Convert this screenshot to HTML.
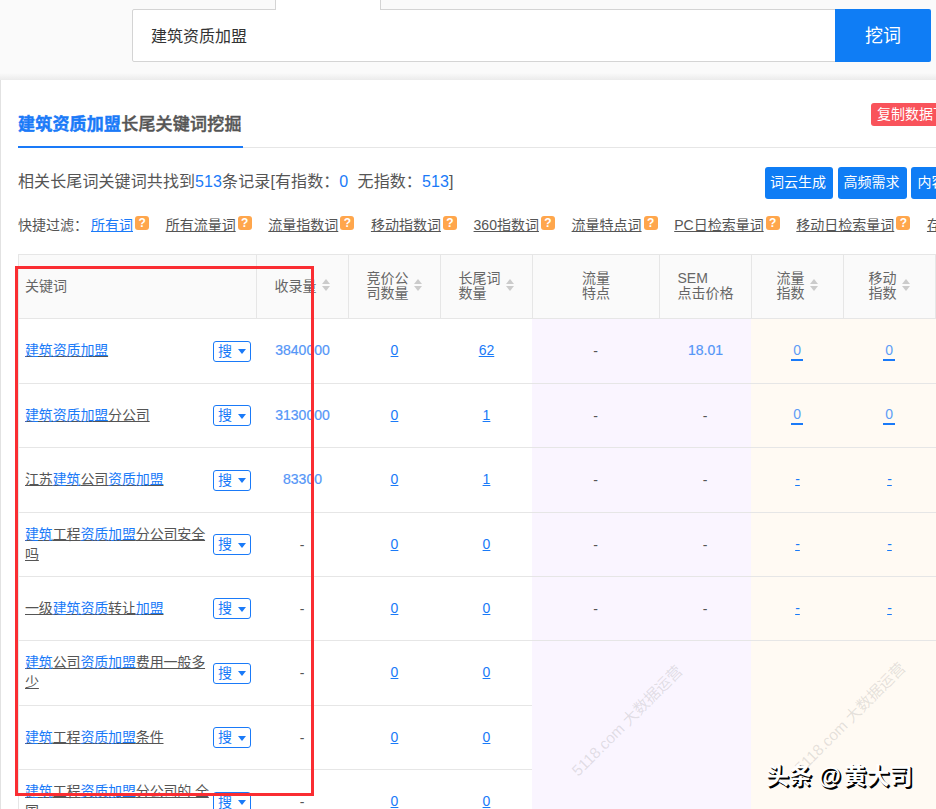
<!DOCTYPE html><html lang="zh-CN"><head><meta charset="utf-8"><title>长尾关键词挖掘</title><style>
*{margin:0;padding:0;box-sizing:border-box}
html,body{width:936px;height:809px;overflow:hidden;background:#fff}
body{position:relative;font-family:"Liberation Sans","Noto Sans CJK SC",sans-serif;font-size:14px;color:#555;}
.abs{position:absolute}
a{color:#1a7af8;text-decoration:underline}
.hdr{left:0;top:0;width:936px;height:80px;background:#fafafa}
.hdr .shadow{left:0;top:73px;width:936px;height:7px;background:linear-gradient(#fafafa,#ebebeb)}
.inp{left:132px;top:9px;width:704px;height:53px;background:#fff;border:1px solid #d4d4d4;border-radius:2px 0 0 2px;font-size:16px;color:#333;line-height:53px;padding-left:18px}
.tabgap{left:276px;top:0;width:104px;height:10px;background:#fff}
.tabl{left:275px;top:0;width:1px;height:10px;background:#d4d4d4}
.tabr{left:380px;top:0;width:1px;height:10px;background:#d4d4d4}
.go{left:835px;top:9px;width:96px;height:53px;background:#0f7df5;color:#fff;font-size:18px;text-align:center;line-height:55px;border-radius:0 2px 2px 0}
.cardl{left:0;top:80px;width:1px;height:729px;background:#e2e2e2}
.title{left:18px;top:108.5px;font-size:17px;letter-spacing:.2px;font-weight:500;-webkit-text-stroke:.45px;line-height:32px;white-space:nowrap;color:#555}
.title b{color:#1a7af8}
.tline{left:18px;top:147px;width:918px;height:1px;background:#e6e6e6}
.tblue{left:18px;top:146px;width:225px;height:2px;background:#1a7af8}
.badge{left:871px;top:103px;width:90px;height:23px;background:#f9535b;border-radius:3px;color:#fff;font-size:14px;line-height:22px;padding-left:6px;white-space:nowrap}
.stat{left:18px;top:170px;letter-spacing:.1px;font-size:16px;line-height:24px;white-space:nowrap;color:#555}
.stat i{font-style:normal;color:#1a7af8}
.btn{top:167px;height:32px;width:68px;background:#0f7df5;color:#fff;border-radius:3px;font-size:14px;line-height:31px;padding-left:5px;white-space:nowrap;overflow:hidden}
.filt{left:18px;top:215px;font-size:14px;line-height:20px;white-space:nowrap;color:#555}
.filt a{color:#555}
.filt a.on{color:#1a7af8}
.q{display:inline-block;width:14px;height:14px;background:#ffa64c;border-radius:3px;color:#fff;font-size:12px;font-weight:bold;line-height:14px;text-align:center;vertical-align:top;margin:1px 16.55px 0 2.1px;text-decoration:none}
.thead{left:18px;top:254px;width:918px;height:64px;background:#fafafa}
.vl{width:1px;background:#e6e6e6}
.hl{height:1px;background:#e6e6e6}
.th{top:254px;height:64px;display:flex;align-items:center;justify-content:center;font-size:14px;line-height:15px;color:#666}
.th .t{display:block;text-align:left}
.sort{display:inline-block;width:9px;height:12px;margin-left:5px;position:relative;top:-1px}
.sort:before,.sort:after{content:"";position:absolute;left:0;border-left:4.5px solid transparent;border-right:4.5px solid transparent}
.sort:before{top:0;border-bottom:5px solid #cbcbcb}
.sort:after{bottom:0;border-top:5px solid #cbcbcb}
.purple{left:532px;top:318px;width:219px;height:491px;background:#faf5ff}
.orange{left:751px;top:318px;width:185px;height:491px;background:#fffaf3}
.kw{left:25px;width:186px;display:flex;align-items:center;line-height:20px;font-size:14px;letter-spacing:-.15px}
.kw a{color:#555}
.kw a b{font-weight:normal;color:#1a7af8}
.sou{left:213px;width:38px;height:21px;border:1px solid #1a7af8;border-radius:3px;color:#1a7af8;font-size:14px;line-height:19px;padding-left:4px;background:#fff}
.sou:after{content:"";position:absolute;left:23.5px;top:7.5px;border-left:4.3px solid transparent;border-right:4.3px solid transparent;border-top:5.3px solid #1a7af8}
.c{display:flex;align-items:center;justify-content:center;font-size:14px;line-height:20px}
.c.lb{color:#5596f7;-webkit-text-stroke:.2px #5596f7}
.c.d{padding-top:2px;padding-right:1px}
.c .u{color:#5d9df6;text-decoration:none;border-bottom:2px solid #1a7af8;padding:0 2px 2px 2px;line-height:14px;position:relative;top:1.7px;left:-.4px}
.wm{font-size:15.5px;color:rgba(120,120,120,.2);white-space:nowrap;transform:rotate(-45deg);transform-origin:center;line-height:20px}
.tt{left:766px;top:759px;font-size:23px;line-height:34px;color:#fff;white-space:nowrap;text-shadow:1px 1px 0 #000,1.7px 1.7px 0 #000;font-weight:700}.tt i{font-style:normal;margin:0 2.5px 0 6.5px}
.red{left:15px;top:266px;width:299px;height:530px;border:3px solid #fa2d32}
</style></head><body>
<div class="abs hdr"><div class="abs shadow"></div></div>
<div class="abs inp">建筑资质加盟</div>
<div class="abs tabgap"></div><div class="abs tabl"></div><div class="abs tabr"></div>
<div class="abs go">挖词</div>
<div class="abs cardl"></div>
<div class="abs title"><b>建筑资质加盟</b>长尾关键词挖掘</div>
<div class="abs tline"></div><div class="abs tblue"></div>
<div class="abs badge">复制数据下载</div>
<div class="abs stat">相关长尾词关键词共找到<i>513</i>条记录[有指数：<i>0</i><span style="display:inline-block;width:9.2px"></span>无指数：<i>513</i>]</div>
<div class="abs btn" style="left:765px;width:68px;padding-left:5.0px">词云生成</div>
<div class="abs btn" style="left:838px;width:69px;padding-left:5.5px">高频需求</div>
<div class="abs btn" style="left:911px;width:68px;padding-left:6.5px">内容分析</div>
<div class="abs filt">快捷过滤：<span style="display:inline-block;width:3px"></span><a class="on">所有词</a><span class="q">?</span><a>所有流量词</a><span class="q">?</span><a>流量指数词</a><span class="q">?</span><a>移动指数词</a><span class="q">?</span><a>360指数词</a><span class="q">?</span><a>流量特点词</a><span class="q">?</span><a>PC日检索量词</a><span class="q">?</span><a>移动日检索量词</a><span class="q">?</span><a>存在竞价词</a><span class="q">?</span></div>
<div class="abs thead"></div>
<div class="abs purple"></div><div class="abs orange"></div>
<div class="abs th" style="left:19px;width:237px;justify-content:flex-start;padding-left:6px"><span class="t">关键词</span></div>
<div class="abs th" style="left:257px;width:91px"><span class="t">收录量</span><span class="sort"></span></div>
<div class="abs th" style="left:349px;width:91px"><span class="t">竞价公<br>司数量</span><span class="sort"></span></div>
<div class="abs th" style="left:441px;width:91px"><span class="t">长尾词<br>数量</span><span class="sort"></span></div>
<div class="abs th" style="left:533px;width:126px"><span class="t">流量<br>特点</span></div>
<div class="abs th" style="left:660px;width:91px"><span class="t">SEM<br>点击价格</span></div>
<div class="abs th" style="left:752px;width:91px"><span class="t">流量<br>指数</span><span class="sort"></span></div>
<div class="abs th" style="left:844px;width:91px"><span class="t">移动<br>指数</span><span class="sort"></span></div>
<div class="abs hl" style="left:18px;top:254px;width:918px"></div>
<div class="abs vl" style="left:18px;top:254px;height:64px"></div>
<div class="abs vl" style="left:256px;top:254px;height:64px"></div>
<div class="abs vl" style="left:348px;top:254px;height:64px"></div>
<div class="abs vl" style="left:440px;top:254px;height:64px"></div>
<div class="abs vl" style="left:532px;top:254px;height:64px"></div>
<div class="abs vl" style="left:659px;top:254px;height:64px"></div>
<div class="abs vl" style="left:751px;top:254px;height:64px"></div>
<div class="abs vl" style="left:843px;top:254px;height:64px"></div>
<div class="abs vl" style="left:935px;top:254px;height:64px"></div>
<div class="abs vl" style="left:18px;top:318px;height:491px"></div>
<div class="abs hl" style="left:18px;top:318px;width:918px"></div>
<div class="abs hl" style="left:18px;top:383px;width:918px"></div>
<div class="abs hl" style="left:18px;top:447px;width:918px"></div>
<div class="abs hl" style="left:18px;top:512px;width:918px"></div>
<div class="abs hl" style="left:18px;top:576px;width:918px"></div>
<div class="abs hl" style="left:18px;top:640px;width:918px"></div>
<div class="abs hl" style="left:18px;top:705px;width:514px"></div>
<div class="abs hl" style="left:18px;top:769px;width:514px"></div>
<div class="abs kw" style="top:317.6px;height:65.0px"><a><b>建筑资质加盟</b></a></div>
<div class="abs sou" style="top:340.5px">搜</div>
<div class="abs c lb" style="left:257px;width:91px;top:317.6px;height:65.0px">3840000</div>
<div class="abs c" style="left:349px;width:91px;top:317.6px;height:65.0px"><a>0</a></div>
<div class="abs c" style="left:441px;width:91px;top:317.6px;height:65.0px"><a>62</a></div>
<div class="abs c d" style="left:533px;width:126px;top:317.6px;height:65.0px">-</div>
<div class="abs c lb" style="left:660px;width:91px;top:317.6px;height:65.0px">18.01</div>
<div class="abs c" style="left:752px;width:91px;top:317.6px;height:65.0px"><a class="u">0</a></div>
<div class="abs c" style="left:844px;width:91px;top:317.6px;height:65.0px"><a class="u">0</a></div>
<div class="abs kw" style="top:382.6px;height:64.0px"><a><b>建筑资质加盟</b>分公司</a></div>
<div class="abs sou" style="top:405.0px">搜</div>
<div class="abs c lb" style="left:257px;width:91px;top:382.6px;height:64.0px">3130000</div>
<div class="abs c" style="left:349px;width:91px;top:382.6px;height:64.0px"><a>0</a></div>
<div class="abs c" style="left:441px;width:91px;top:382.6px;height:64.0px"><a>1</a></div>
<div class="abs c d" style="left:533px;width:126px;top:382.6px;height:64.0px">-</div>
<div class="abs c d" style="left:660px;width:91px;top:382.6px;height:64.0px">-</div>
<div class="abs c" style="left:752px;width:91px;top:382.6px;height:64.0px"><a class="u">0</a></div>
<div class="abs c" style="left:844px;width:91px;top:382.6px;height:64.0px"><a class="u">0</a></div>
<div class="abs kw" style="top:446.6px;height:65.0px"><a>江苏<b>建筑</b>公司<b>资质加盟</b></a></div>
<div class="abs sou" style="top:469.5px">搜</div>
<div class="abs c lb" style="left:257px;width:91px;top:446.6px;height:65.0px">83300</div>
<div class="abs c" style="left:349px;width:91px;top:446.6px;height:65.0px"><a>0</a></div>
<div class="abs c" style="left:441px;width:91px;top:446.6px;height:65.0px"><a>1</a></div>
<div class="abs c d" style="left:533px;width:126px;top:446.6px;height:65.0px">-</div>
<div class="abs c d" style="left:660px;width:91px;top:446.6px;height:65.0px">-</div>
<div class="abs c" style="left:752px;width:91px;top:446.6px;height:65.0px"><a>-</a></div>
<div class="abs c" style="left:844px;width:91px;top:446.6px;height:65.0px"><a>-</a></div>
<div class="abs kw" style="top:511.6px;height:64.0px"><a><b>建筑</b>工程<b>资质加盟</b>分公司安全吗</a></div>
<div class="abs sou" style="top:534.0px">搜</div>
<div class="abs c d" style="left:257px;width:91px;top:511.6px;height:64.0px">-</div>
<div class="abs c" style="left:349px;width:91px;top:511.6px;height:64.0px"><a>0</a></div>
<div class="abs c" style="left:441px;width:91px;top:511.6px;height:64.0px"><a>0</a></div>
<div class="abs c d" style="left:533px;width:126px;top:511.6px;height:64.0px">-</div>
<div class="abs c d" style="left:660px;width:91px;top:511.6px;height:64.0px">-</div>
<div class="abs c" style="left:752px;width:91px;top:511.6px;height:64.0px"><a>-</a></div>
<div class="abs c" style="left:844px;width:91px;top:511.6px;height:64.0px"><a>-</a></div>
<div class="abs kw" style="top:575.5px;height:64.0px"><a>一级<b>建筑资质</b>转让<b>加盟</b></a></div>
<div class="abs sou" style="top:598.0px">搜</div>
<div class="abs c d" style="left:257px;width:91px;top:575.5px;height:64.0px">-</div>
<div class="abs c" style="left:349px;width:91px;top:575.5px;height:64.0px"><a>0</a></div>
<div class="abs c" style="left:441px;width:91px;top:575.5px;height:64.0px"><a>0</a></div>
<div class="abs c d" style="left:533px;width:126px;top:575.5px;height:64.0px">-</div>
<div class="abs c d" style="left:660px;width:91px;top:575.5px;height:64.0px">-</div>
<div class="abs c" style="left:752px;width:91px;top:575.5px;height:64.0px"><a>-</a></div>
<div class="abs c" style="left:844px;width:91px;top:575.5px;height:64.0px"><a>-</a></div>
<div class="abs kw" style="top:639.5px;height:65.0px"><a><b>建筑</b>公司<b>资质加盟</b>费用一般多少</a></div>
<div class="abs sou" style="top:662.5px">搜</div>
<div class="abs c d" style="left:257px;width:91px;top:639.5px;height:65.0px">-</div>
<div class="abs c" style="left:349px;width:91px;top:639.5px;height:65.0px"><a>0</a></div>
<div class="abs c" style="left:441px;width:91px;top:639.5px;height:65.0px"><a>0</a></div>
<div class="abs kw" style="top:704.5px;height:64.0px"><a><b>建筑</b>工程<b>资质加盟</b>条件</a></div>
<div class="abs sou" style="top:727.0px">搜</div>
<div class="abs c d" style="left:257px;width:91px;top:704.5px;height:64.0px">-</div>
<div class="abs c" style="left:349px;width:91px;top:704.5px;height:64.0px"><a>0</a></div>
<div class="abs c" style="left:441px;width:91px;top:704.5px;height:64.0px"><a>0</a></div>
<div class="abs kw" style="top:768.5px;height:65.0px"><a><b>建筑</b>工程<b>资质加盟</b>分公司的 全国</a></div>
<div class="abs sou" style="top:791.5px">搜</div>
<div class="abs c d" style="left:257px;width:91px;top:768.5px;height:65.0px">-</div>
<div class="abs c" style="left:349px;width:91px;top:768.5px;height:65.0px"><a>0</a></div>
<div class="abs c" style="left:441px;width:91px;top:768.5px;height:65.0px"><a>0</a></div>
<div class="abs wm" style="left:553px;top:711px">5118.com 大数据运营</div>
<div class="abs wm" style="left:775.5px;top:708px">5118.com 大数据运营</div>
<div class="abs tt">头条<i>@</i>黄大司</div>
<div class="abs red"></div>
</body></html>
